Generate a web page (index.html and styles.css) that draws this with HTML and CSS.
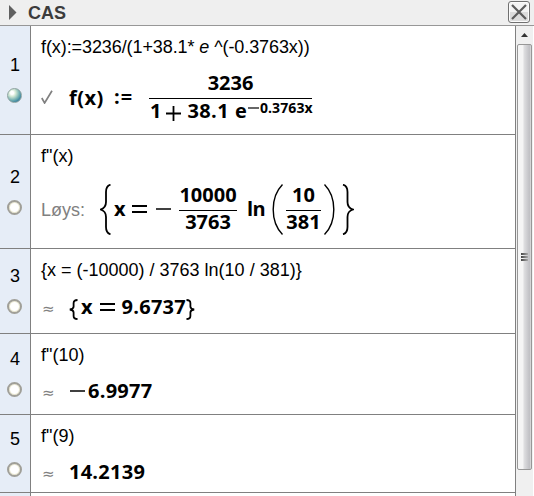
FILE: index.html
```html
<!DOCTYPE html>
<html lang="nn">
<head>
<meta charset="utf-8">
<title>CAS</title>
<link rel="stylesheet" href="styles.css">
</head>
<body>
<header class="bar">
  <svg class="arrow" width="8" height="15" viewBox="0 0 8 15"><path d="M0 0L7.5 7.5L0 15Z" fill="#606060"/></svg>
  <h1 class="title">CAS</h1>
  <button class="close" aria-label="Lukk"><svg width="16" height="16" viewBox="0 0 16 16"><path d="M1 1L15 15M15 1L1 15" stroke="#5c5c5c" stroke-width="2.2"/></svg></button>
</header>
<main class="view">
  <div class="rows">
    <section class="row r1">
      <div class="gutter"><span class="num">1</span><span class="dot on"></span></div>
      <div class="cell">
        <div class="input i1">f(x):=3236/(1+38.1* <i>e</i> ^(-0.3763x))</div>
        <div class="output">
          <span class="sym"><svg width="12" height="14" viewBox="0 0 12 14"><path d="M0.8 8L3.6 13L11 0.8" fill="none" stroke="#808080" stroke-width="1.7"/></svg></span>
          <span class="fx">f(x)</span><span class="assign">:=</span>
          <span class="frac f1"><span class="top">3236</span><span class="bottom"><span class="one">1</span><svg class="plus" width="15" height="15" viewBox="0 0 15 15"><path d="M0 7.5H15M7.5 0V15" stroke="#000" stroke-width="1.8"/></svg><span class="coef">38.1</span><span class="e">e</span><sup><svg class="supminus" width="11" height="2" viewBox="0 0 11 2"><path d="M0 1H11" stroke="#000" stroke-width="1.2"/></svg>0.3763x</sup></span></span>
        </div>
      </div>
    </section>
    <section class="row r2">
      <div class="gutter"><span class="num">2</span><span class="dot"></span></div>
      <div class="cell">
        <div class="input">f"(x)</div>
        <div class="output">
          <span class="solve">Løys:</span>
          <svg class="brace" width="12" height="51" viewBox="0 0 12 51"><path d="M10.5 .7Q6 2 6 8V18Q6 24 .5 25.5Q6 27 6 33V43Q6 49 10.5 50.3" fill="none" stroke="#000" stroke-width="1.8"/></svg>
          <span class="x">x</span>
          <svg class="eq" width="15" height="8" viewBox="0 0 15 8"><path d="M0 1H15M0 7H15" stroke="#000" stroke-width="2"/></svg>
          <svg class="minus" width="15" height="2" viewBox="0 0 15 2"><path d="M0 1H15" stroke="#000" stroke-width="1.5"/></svg>
          <span class="frac f2"><span class="top">10000</span><span class="bottom">3763</span></span>
          <span class="ln">ln</span>
          <svg class="paren" width="11" height="51" viewBox="0 0 11 51"><path d="M10.5 .5Q1.2 10 1.2 25.5T10.5 50.5" fill="none" stroke="#000" stroke-width="1.4"/></svg>
          <span class="frac f3"><span class="top">10</span><span class="bottom">381</span></span>
          <svg class="paren" width="11" height="51" viewBox="0 0 11 51"><path d="M.5 .5Q9.8 10 9.8 25.5T.5 50.5" fill="none" stroke="#000" stroke-width="1.4"/></svg>
          <svg class="brace last" width="12" height="51" viewBox="0 0 12 51"><path d="M1 .7Q5.5 2 5.5 8V18Q5.5 24 11 25.5Q5.5 27 5.5 33V43Q5.5 49 1 50.3" fill="none" stroke="#000" stroke-width="1.8"/></svg>
        </div>
      </div>
    </section>
    <section class="row r3">
      <div class="gutter"><span class="num">3</span><span class="dot"></span></div>
      <div class="cell">
        <div class="input i3">{x = (-10000) / 3763 ln(10 / 381)}</div>
        <div class="output">
          <span class="sym approx">≈</span>
          <svg class="sb" width="9" height="21" viewBox="0 0 9 21"><path d="M8.5 1Q4.6 1 4.6 4V7.5Q4.6 10 .8 10.5Q4.6 11 4.6 13.5V17Q4.6 20 8.5 20" fill="none" stroke="#000" stroke-width="1.8"/></svg>
          <span class="x3">x</span>
          <svg class="eq eq3" width="15" height="8" viewBox="0 0 15 8"><path d="M0 1H15M0 7H15" stroke="#000" stroke-width="2"/></svg>
          <span class="val">9.6737</span>
          <svg class="sb" width="9" height="21" viewBox="0 0 9 21"><path d="M.5 1Q4.4 1 4.4 4V7.5Q4.4 10 8.2 10.5Q4.4 11 4.4 13.5V17Q4.4 20 .5 20" fill="none" stroke="#000" stroke-width="1.8"/></svg>
        </div>
      </div>
    </section>
    <section class="row r4">
      <div class="gutter"><span class="num">4</span><span class="dot"></span></div>
      <div class="cell">
        <div class="input">f"(10)</div>
        <div class="output">
          <span class="sym approx">≈</span>
          <svg class="neg" width="15" height="2" viewBox="0 0 15 2"><path d="M0 1H15" stroke="#000" stroke-width="1.5"/></svg>
          <span class="val">6.9977</span>
        </div>
      </div>
    </section>
    <section class="row r5">
      <div class="gutter"><span class="num">5</span><span class="dot"></span></div>
      <div class="cell">
        <div class="input">f"(9)</div>
        <div class="output"><span class="sym approx">≈</span><span class="val">14.2139</span></div>
      </div>
    </section>
    <section class="row r6"><div class="gutter"></div><div class="cell"></div></section>
  </div>
  <div class="scroll">
    <div class="up"><svg width="7" height="4" viewBox="0 0 7 4"><path d="M3.5 0L7 4H0Z" fill="#333"/></svg></div>
    <div class="thumb"><i class="grip"></i><i class="grip"></i><i class="grip"></i></div>
  </div>
</main>
</body>
</html>
```

FILE: styles.css
```css
* { box-sizing: border-box; }
html, body { margin: 0; height: 100%; overflow: hidden; }
body {
  display: flex;
  flex-direction: column;
  background: #fff;
  color: #000;
  font-family: "Liberation Sans", Arial, sans-serif;
  font-size: 18px;
}
svg { display: block; flex: none; }

.bar {
  flex: none;
  display: flex;
  align-items: center;
  height: 26px;
  padding: 0 4px 1px 9px;
  background: #efefef;
  border-bottom: 1px solid #979797;
}
.title { margin: 1px 0 0 11px; font-size: 18px; line-height: 24px; color: #3c3c3c; }
.close {
  display: flex;
  align-items: center;
  justify-content: center;
  width: 22px;
  height: 22px;
  margin-left: auto;
  padding: 0;
  border: 1px solid #707070;
  border-radius: 3px;
  background: linear-gradient(#f3f3f3 0 48%, #dcdcdc 50% 100%);
  box-shadow: inset 0 0 0 1px #fbfbfb;
}

.view { flex: 1; display: flex; min-height: 0; }
.rows { flex: none; width: 516px; border-right: 1px solid #808080; overflow: hidden; }
.row { display: flex; border-bottom: 1px solid #808080; }
.r1 { height: 109px; }
.r2 { height: 114px; }
.r3 { height: 85px; }
.r4 { height: 81px; }
.r5 { height: 78px; }
.r6 { height: 30px; }

.gutter {
  flex: none;
  display: flex;
  flex-direction: column;
  align-items: center;
  justify-content: center;
  width: 31px;
  padding-bottom: 4px;
  background: #e6edf7;
  border-right: 1px solid #808080;
}
.num { line-height: 24px; }
.dot {
  width: 15px;
  height: 15px;
  margin: 11px 1px 0 0;
  border: 2px solid #a09f98;
  border-radius: 50%;
  background: #fff;
  box-shadow: inset 0 0 0 1px #e9e7cf;
}
.dot.on {
  border: 1px solid #8fa3a0;
  background: radial-gradient(circle at 32% 30%, #fff 0 12%, #d3e8d4 28%, #6fadb0 58%, #1f6f99 85%);
  box-shadow: none;
}

.cell { flex: 1; padding: 9px 0 0 10px; }
.input { line-height: 24px; white-space: pre; }
.i1 { letter-spacing: -.09px; }
.output {
  display: flex;
  align-items: center;
  font: 700 20px/28px "Open Sans", "Noto Sans", sans-serif;
}
.sym { flex: none; width: 28px; font-weight: 400; color: #808080; }
.approx { width: 27px; margin-left: 1px; padding-top: 4px; font: 15px/24px "DejaVu Sans", sans-serif; }
.val { letter-spacing: .25px; }

.r1 .output { margin-top: 12px; line-height: 22px; }
.fx { width: 45px; padding-top: 2px; letter-spacing: .5px; }
.assign { width: 35px; padding-top: 1px; letter-spacing: 1px; }
.frac { display: flex; flex-direction: column; align-items: center; line-height: 22px; }
.top { padding-bottom: 5px; }
.bottom {
  display: flex;
  justify-content: center;
  align-self: stretch;
  border-top: 1px solid #000;
}
.f1 { width: 163px; }
.f1 .top, .f1 .bottom { position: relative; top: 0; }
.f1 .top { padding: 1px 0 4px; }
.f1 .bottom { justify-content: flex-start; padding-top: 1px; white-space: nowrap; }
.one { margin-left: 1px; }
.plus { margin: 6px 6px 0 5px; }
.coef { letter-spacing: .4px; }
.e { margin-left: 6px; }
sup { display: flex; align-items: center; height: 16px; font-size: 14px; line-height: 16px; letter-spacing: .1px; }
.supminus { margin: 0 1px 0 1px; }

.r2 .output { margin-top: 14px; }
.solve { width: 59px; padding-top: 2px; font: 18px/24px "Liberation Sans", Arial, sans-serif; color: #808080; }
.r2 .brace, .r2 .paren { margin-top: 2px; }
.x { margin-left: 2px; width: 18px; }
.minus { margin: 0 8px 0 9px; }
.f2 { width: 58px; }
.r2 .top { padding-bottom: 4px; }
.ln { width: 18px; margin: 0 7px 0 10px; letter-spacing: -.5px; }
.f3 { width: 35px; margin: 0 3px; }
.r2 .last { margin-left: 7px; }

.r3 .output { margin-top: 11px; }
.sb { margin-top: 4px; }
.x3 { margin: 0 7px 0 3px; }
.eq3 { margin-right: 7px; }
.r4 .output, .r5 .output { margin-top: 10px; }
.neg { margin: 0 3px 0 1px; }

.scroll { width: 17px; background: #f0f0f0; }
.up { display: flex; align-items: center; justify-content: center; height: 18px; }
.thumb {
  display: flex;
  flex-direction: column;
  align-items: center;
  justify-content: center;
  gap: 1px;
  width: 15px;
  height: 426px;
  margin-left: 1px;
  border: 1px solid #979797;
  border-radius: 2px;
  background: linear-gradient(90deg, #f5f5f5 0 35%, #dcdcde 50%, #c0c0c4 88%, #dedede);
}
.grip { width: 7px; height: 2px; background: linear-gradient(90deg, #444, #aaa); }
```
